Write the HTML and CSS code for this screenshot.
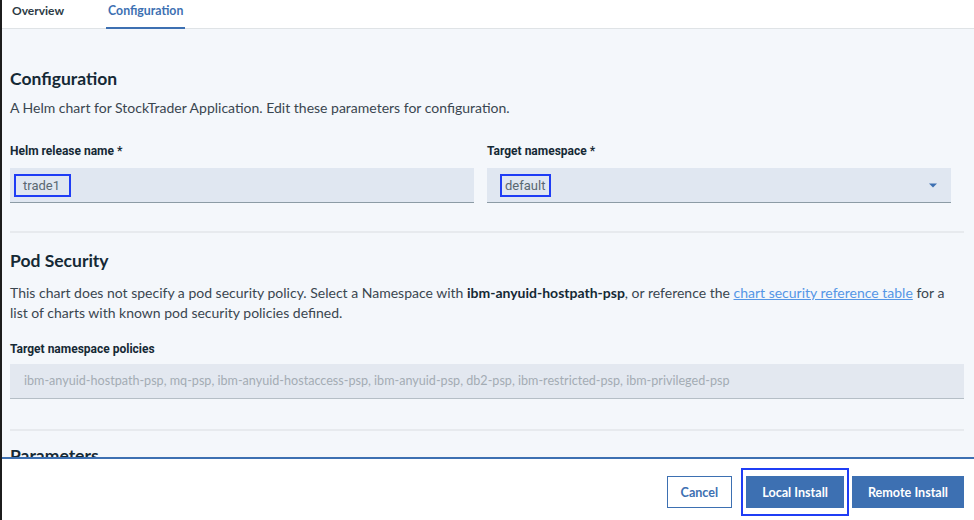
FILE: index.html
```html
<!DOCTYPE html>
<html lang="en">
<head>
<meta charset="utf-8">
<title>Configuration</title>
<link rel="stylesheet" href="styles.css">
</head>
<body>
<div class="frame">
  <nav class="tabs">
    <span class="tab">Overview</span>
    <span class="tab tab-active">Configuration</span>
  </nav>
  <main class="content">
    <section class="section">
      <h2 class="heading">Configuration</h2>
      <p class="desc">A Helm chart for StockTrader Application. Edit these parameters for configuration.</p>
      <div class="fields">
        <div class="field">
          <label class="label">Helm release name *</label>
          <div class="input input-text"><span class="annot annot-release">trade1</span></div>
        </div>
        <div class="field">
          <label class="label">Target namespace *</label>
          <div class="input input-select">
            <span class="annot annot-ns">default</span>
            <svg class="caret" width="8" height="5" viewBox="0 0 8 5"><path d="M0 0.5 H8 L4 4.5 Z" fill="#3d70b2"/></svg>
          </div>
        </div>
      </div>
    </section>
    <hr class="divider divider-first">
    <section class="section">
      <h2 class="heading heading-pod">Pod Security</h2>
      <p class="desc desc-pod">This chart does not specify a pod security policy. Select a Namespace with <strong>ibm-anyuid-hostpath-psp</strong>, or reference the <a class="link" href="#">chart security reference table</a> for a list of charts with known pod security policies defined.</p>
      <label class="label label-policies">Target namespace policies</label>
      <div class="policies">ibm-anyuid-hostpath-psp, mq-psp, ibm-anyuid-hostaccess-psp, ibm-anyuid-psp, db2-psp, ibm-restricted-psp, ibm-privileged-psp</div>
    </section>
    <hr class="divider divider-second">
    <section class="section">
      <h2 class="heading heading-params">Parameters</h2>
    </section>
  </main>
  <footer class="footer">
    <button class="btn btn-secondary">Cancel</button>
    <button class="btn btn-primary btn-focus">Local Install</button>
    <button class="btn btn-primary">Remote Install</button>
  </footer>
</div>
</body>
</html>
```
FILE: styles.css
```css
* { box-sizing: border-box; }
html, body { margin: 0; padding: 0; }
body {
  width: 974px;
  height: 520px;
  overflow: hidden;
  background: #ffffff;
  font-family: "Lato", "Liberation Sans", sans-serif;
  color: #152935;
}
.frame {
  height: 520px;
  border-left: 2px solid #1c1c1c;
  display: flex;
  flex-direction: column;
}
.tabs {
  height: 29px;
  flex: none;
  background: #ffffff;
  border-bottom: 1px solid #dfe3e6;
  display: flex;
  padding-left: 9px;
  gap: 41px;
}
.tab {
  font-size: 12px;
  font-weight: 700;
  line-height: 21px;
  height: 29px;
  color: #2d3b45;
  padding: 0 1px;
}
.tab-active {
  color: #3d70b2;
  border-bottom: 2px solid #3d70b2;
  padding: 0 2px;
  font-size: 12.3px;
}
.content {
  flex: none;
  height: 428px;
  overflow: hidden;
  background: #f4f7fb;
  padding: 39px 10px 0 8px;
}
.section { margin: 0; }
.heading {
  margin: 0;
  font-size: 17.5px;
  line-height: 22px;
  font-weight: 700;
  color: #152935;
}
.desc {
  margin: 8px 0 0;
  font-size: 14px;
  line-height: 20px;
  color: #3a4650;
}
.fields {
  display: grid;
  grid-template-columns: 464px 464px;
  column-gap: 13px;
  margin-top: 25px;
}
.field { display: flex; flex-direction: column; }
.label {
  display: block;
  font-family: "Roboto", "Liberation Sans", sans-serif;
  font-size: 12px;
  font-weight: 700;
  line-height: 16px;
  color: #152935;
}
.input {
  margin-top: 9px;
  height: 35px;
  background: #e0e7f1;
  border-bottom: 1px solid #8c9ba5;
  display: flex;
  align-items: center;
  font-family: "Roboto", "Liberation Sans", sans-serif;
  font-size: 13px;
  color: #5a6872;
}
.input-text { padding-left: 4px; }
.input-select { padding-left: 13px; padding-right: 14px; justify-content: space-between; }
.annot {
  display: inline-block;
  border: 2px solid #1f3df5;
  line-height: 19px;
}
.annot-release { padding: 0 9px 0 7px; }
.annot-ns { padding: 0 4px 0 3px; }
.caret { display: block; }
.divider {
  border: 0;
  height: 2px;
  background: #e7eaee;
  margin: 0;
}
.divider-first { margin-top: 28px; }
.divider-second { margin-top: 30px; }
.heading-pod { margin-top: 17px; }
.desc-pod { margin-top: 11px; }
.desc-pod strong { font-weight: 700; color: #152935; }
.link { color: #5596e6; text-decoration: underline; }
.label-policies { margin-top: 18px; }
.policies {
  margin-top: 7px;
  height: 35px;
  background: #e3e8f0;
  border-bottom: 1px solid #b5bec6;
  padding-left: 14px;
  font-size: 12.6px;
  line-height: 34px;
  color: #a3acb4;
  white-space: nowrap;
  overflow: hidden;
}
.heading-params { margin-top: 14px; }
.footer {
  flex: 1;
  background: #ffffff;
  border-top: 2px solid #3d70b2;
  display: flex;
  justify-content: flex-end;
  align-items: flex-start;
  padding: 17px 10px 0 0;
}
.btn {
  height: 32px;
  font-family: "Lato", "Liberation Sans", sans-serif;
  font-size: 12.6px;
  font-weight: 700;
  padding: 0 15px;
  border: 1px solid #3d70b2;
  cursor: pointer;
}
.btn-secondary {
  background: #ffffff;
  color: #3d70b2;
  padding: 0 13px;
  margin-right: 14px;
}
.btn-primary {
  background: #3d70b2;
  color: #ffffff;
}
.btn-focus {
  position: relative;
  margin-right: 8px;
}
.btn-focus::after {
  content: "";
  position: absolute;
  top: -9px;
  bottom: -9px;
  left: -6px;
  right: -6px;
  border: 2px solid #1f3df5;
}
```
